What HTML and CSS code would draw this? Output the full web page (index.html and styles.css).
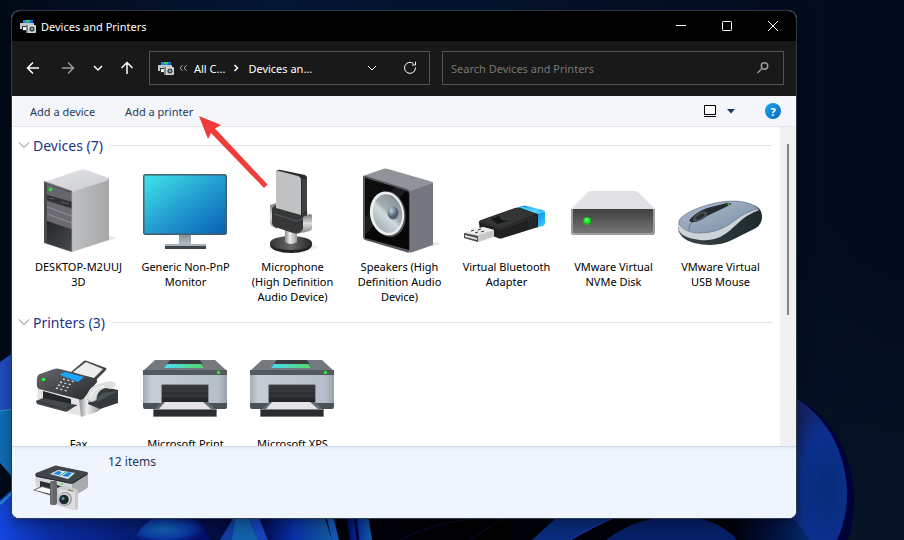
FILE: index.html
```html
<!DOCTYPE html>
<html lang="en">
<head>
<meta charset="utf-8">
<meta name="viewport" content="width=device-width, initial-scale=1">
<title>Devices and Printers</title>
<link rel="stylesheet" href="styles.css">
</head>
<body>
<svg class="wallpaper" viewBox="0 0 904 540" preserveAspectRatio="none" aria-hidden="true">
  <defs>
    <linearGradient id="sky" x2="1" y2="0"><stop stop-color="#010b18"/><stop offset=".3" stop-color="#061838"/><stop offset=".65" stop-color="#031128"/><stop offset="1" stop-color="#010a18"/></linearGradient>
    <linearGradient id="skyLow" x2="0" y2="1"><stop offset=".4" stop-color="#061326" stop-opacity="0"/><stop offset="1" stop-color="#051426"/></linearGradient>
    <radialGradient id="petal" cx=".72" cy=".65" r=".6"><stop stop-color="#052b78"/><stop offset=".65" stop-color="#0c308d"/><stop offset="1" stop-color="#142569"/></radialGradient>
    <linearGradient id="floor" x2="1" y2="0"><stop stop-color="#1447e0"/><stop offset=".1" stop-color="#0b2da4"/><stop offset=".45" stop-color="#010a3c"/><stop offset=".58" stop-color="#000111"/><stop offset="1" stop-color="#000"/></linearGradient>
    <linearGradient id="stripe" x2="1" y2="0"><stop stop-color="#01064a"/><stop offset=".5" stop-color="#0832a8"/><stop offset="1" stop-color="#145b9e"/></linearGradient>
    <radialGradient id="dome" cx=".4" cy=".6" r=".55"><stop stop-color="#1365b0"/><stop offset=".6" stop-color="#0b3ba4"/><stop offset="1" stop-color="#04106a"/></radialGradient>
    <linearGradient id="fold" x2="1" y2="0"><stop stop-color="#000109"/><stop offset=".5" stop-color="#02103a"/><stop offset="1" stop-color="#052a6e"/></linearGradient>
  </defs>
  <rect width="904" height="540" fill="url(#sky)"/>
  <rect x="700" width="204" height="540" fill="url(#skyLow)"/>
  <path d="M790 395c40 18 64 58 64 105 0 14-2 28-6 40h-70z" fill="#02023a"/>
  <path d="M790 395c36 18 57 58 57 100 0 17-4 32-10 45h-60z" fill="url(#petal)"/>
  <path d="M0 362l14-10v60l-14-1z" fill="#224fc0"/>
  <path d="M0 411l14-2v70l-14-16z" fill="#116eb8"/>
  <path d="M0 411l14-2" stroke="#2c9bc4"/>
  <path d="M0 500l14-12v52H0z" fill="#1447d8"/>
  <path d="M0 504l14-13" stroke="#3894c9" stroke-width="2"/>
  <rect y="515" width="510" height="25" fill="url(#floor)"/>
  <path d="M510 515h240v25H510z" fill="#000208"/>
  <path d="M134 540c12-25 36-31 55-25 12 7 18 15 20 25z" fill="url(#dome)"/>
  <path d="M220 540l15-25h19l12 25z" fill="#123da0"/>
  <path d="M232 540l4-25h11l11 25z" fill="#1261ab"/>
  <path d="M248 515l10 25h10l-10-25z" fill="#1744bd"/>
  <path d="M258 515h66l8 25h-63z" fill="url(#stripe)"/>
  <path d="M326 515h7l6 25h-7z" fill="#1557b4"/>
  <path d="M346 515h22l4 25h-22z" fill="url(#stripe)"/>
  <path d="M355 515l3 25" stroke="#010634" stroke-width="3"/>
  <path d="M400 540c40-20 70-22 110-23M470 540l36-24" stroke="#050e34" fill="none"/>
  <path d="M532 540l24-22h56l-42 22z" fill="#092c7d"/>
  <path d="M570 540q24-14 44-22" stroke="#2039c0" fill="none"/>
  <path d="M606 540q34-26 72-22 34-4 60 22z" fill="#061f67"/>
  <path d="M736 540l-5-24h58q12 8 20 24z" fill="url(#fold)"/>
</svg>

<!-- Shared icon symbols -->
<svg class="symbols" aria-hidden="true">
  <defs>
    <linearGradient id="pBody" x2="1" y2="0"><stop stop-color="#a3abb4"/><stop offset=".1" stop-color="#c6cdd5"/><stop offset=".9" stop-color="#b5bec8"/><stop offset="1" stop-color="#98a2ac"/></linearGradient>
    <linearGradient id="pGlass" x2="1" y2="0"><stop stop-color="#49dcf5"/><stop offset="1" stop-color="#58d765"/></linearGradient>
    <linearGradient id="pSlot" x2="0" y2="1"><stop stop-color="#373b3e"/><stop offset="1" stop-color="#1c1f21"/></linearGradient>
  </defs>
  <symbol id="app" viewBox="0 0 16 13">
    <path d="M3 0h10v4H3z" fill="#168ce3"/><path d="M6 0h4v2H6z" fill="#24cf5b"/><path d="M10 1h3v2h-3z" fill="#0b64d0"/>
    <path d="M0 3h14v6H0z" fill="#c3c6c9"/><path d="M2 6h5v5H2z" fill="#292d30"/><path d="M3 7h3v3H3z" fill="#eee"/>
    <rect x="6" y="5" width="10" height="8" rx="1" fill="#d5d7d8"/><path d="M6 5h2v8H6z" fill="#7f8487"/>
    <circle cx="12" cy="9" r="2.600" fill="#364247"/><circle cx="12" cy="9" r="1.300" fill="#82acb8"/>
  </symbol>
  <symbol id="printer" viewBox="0 0 85 85">
    <path d="M0 26L12 15h60l12 11z" fill="#74797e"/>
    <path d="M27 15h30l4 8H21z" fill="#53585c"/><path d="M27 15h30l2 4H24z" fill="#373c40"/>
    <path d="M24 19h34l3 4H21z" fill="url(#pGlass)"/>
    <path d="M0 25h84v34H0z" fill="url(#pBody)"/><path d="M0 25h84v5H0z" fill="#54595d"/>
    <path d="M0 58h84v4q0 2-2 2H2q-2 0-2-2z" fill="#4c5155"/>
    <rect x="18" y="39" width="48" height="23" rx="1.500" fill="#858c92"/><rect x="19" y="40" width="46" height="22" rx="1" fill="url(#pSlot)"/>
    <path d="M19 46h46M19 51h46" stroke="#404346"/>
    <path d="M19 57h46l8 8H11z" fill="#666d72"/><path d="M22 57h38l8 7H16z" fill="#e5e3e6"/>
    <rect x="10" y="64" width="64" height="8" rx="1" fill="#777e83"/><rect x="11" y="65" width="62" height="6" fill="#292d30"/>
    <rect x="74" y="26" width="3" height="3" rx="1" fill="#2df23c"/>
  </symbol>
</svg>

<main class="window">
  <header class="titlebar">
    <svg class="app-icon" aria-hidden="true"><use href="#app"/></svg>
    <h1>Devices and Printers</h1>
    <button class="caption" aria-label="Minimize"><svg viewBox="0 0 12 12"><path d="M1 5.500h10"/></svg></button>
    <button class="caption" aria-label="Maximize"><svg viewBox="0 0 12 12"><rect x="1.500" y="1.500" width="9" height="9" rx=".8"/></svg></button>
    <button class="caption" aria-label="Close"><svg viewBox="0 0 12 12"><path d="M1 1l10 10M11 1L1 11"/></svg></button>
  </header>

  <div class="toolbar">
    <nav class="history" aria-label="History">
      <button class="tool" aria-label="Back"><svg viewBox="0 0 14 14"><path d="M13 7H1.500M7 1.500L1.500 7 7 12.500"/></svg></button>
      <button class="tool dim" aria-label="Forward"><svg viewBox="0 0 14 14"><path d="M1 7h11.500M7 1.500L12.500 7 7 12.500"/></svg></button>
      <button class="tool" aria-label="Recent locations"><svg viewBox="0 0 14 14"><path d="M3 5l4 4 4-4"/></svg></button>
      <button class="tool" aria-label="Up"><svg viewBox="0 0 14 14"><path d="M7 13V1.500M1.500 7L7 1.500 12.500 7"/></svg></button>
    </nav>
    <div class="address">
      <svg class="app-icon" aria-hidden="true"><use href="#app"/></svg>
      <svg class="ancestors" viewBox="0 0 8 8" aria-hidden="true"><path d="M3.500 1.200L1 4l2.500 2.800M7.500 1.200L5 4l2.500 2.800"/></svg>
      <button class="crumb">All C...</button>
      <svg class="separator" viewBox="0 0 6 8" aria-hidden="true"><path d="M1.500 1L4.500 4 1.500 7"/></svg>
      <button class="crumb last">Devices an...</button>
      <button class="inner" aria-label="Previous locations"><svg viewBox="0 0 14 14"><path d="M3 5l4 4 4-4"/></svg></button>
      <button class="inner" aria-label="Refresh"><svg viewBox="0 0 14 14"><path d="M12.500 6.500A5.500 5.500 0 1 1 10.500 2.600M9 4h3.500V.7"/></svg></button>
    </div>
    <label class="search">
      <input type="search" placeholder="Search Devices and Printers" aria-label="Search Devices and Printers">
      <svg viewBox="0 0 14 14" aria-hidden="true"><circle cx="8.500" cy="5" r="3.200"/><path d="M6 7.500L1.500 12"/></svg>
    </label>
  </div>

  <div class="commands">
    <button class="command">Add a device</button>
    <button class="command">Add a printer</button>
    <button class="view" aria-label="Change view"><svg viewBox="0 0 32 14"><path d="M1.500 1.500h11v9h-11z" fill="#fff" stroke="#000"/><path d="M1 12.500h12" stroke="#000"/><path d="M24 5h8l-4 4.500z" fill="#173966"/></svg></button>
    <button class="help" aria-label="Help">?</button>
  </div>

  <div class="content">
    <div class="groups">
      <section class="group">
        <h2><svg viewBox="0 0 12 8" aria-hidden="true"><path d="M1 1.500l5 5 5-5"/></svg><span>Devices (7)</span></h2>
        <ul>
          <li>
            <svg viewBox="0 0 85 85" aria-hidden="true">
              <defs><linearGradient id="pcSide" x2="1" y2="0"><stop stop-color="#bfc0c2"/><stop offset="1" stop-color="#a6a7a9"/></linearGradient><linearGradient id="pcTop" x2="1" y2="1"><stop stop-color="#e3e4e8"/><stop offset="1" stop-color="#cbccd0"/></linearGradient><linearGradient id="pcLow" x2="1" y2="1"><stop stop-color="#24272a"/><stop offset="1" stop-color="#484b4e"/></linearGradient></defs>
              <path d="M73 68l8 2-8 3z" fill="#e9e9e9"/>
              <path d="M36 22l37-12v62L36 84z" fill="url(#pcSide)"/>
              <path d="M8 14L44 2q3-1 6 0l23 8q0 2-3 3L36 24z" fill="url(#pcTop)"/>
              <path d="M8 13l28 10v61L8 75z" fill="#4b4b50"/>
              <path d="M11 16l25 9v9l-25-7z" fill="#66666c"/><path d="M11 27l25 7v6l-25-8z" fill="#303136"/><path d="M13 30l5 1M25 34l8 2" stroke="#606266"/>
              <path d="M11 33l25 8v20l-25-8z" fill="#6b6b71"/><path d="M11 39l25 9M11 46l25 9" stroke="#9b9ba1" stroke-width=".8"/>
              <path d="M11 53l25 9v21l-25-8z" fill="url(#pcLow)"/>
              <path d="M8.500 14l27.500 9v61" fill="none" stroke="#a6a6aa" stroke-width=".7"/>
              <circle cx="14.500" cy="21.500" r="2" fill="#24e33d"/>
            </svg><span>DESKTOP-M2UUJ<br>3D</span>
          </li>
          <li>
            <svg viewBox="0 0 85 85" aria-hidden="true">
              <defs><linearGradient id="screen" x2="1" y2="1"><stop stop-color="#40e4e8"/><stop offset=".5" stop-color="#239ed1"/><stop offset="1" stop-color="#0860b5"/></linearGradient><linearGradient id="foot" x2="0" y2="1"><stop stop-color="#848c94"/><stop offset="1" stop-color="#b8bec5"/></linearGradient></defs>
              <path d="M36 66h12v11H36z" fill="url(#foot)"/>
              <rect y="6" width="84" height="61" rx="2.500" fill="#445e6c"/><rect x="1.500" y="7.500" width="81" height="58" rx="1" fill="url(#screen)"/>
              <path d="M22 76h41v3H22z" fill="#aab0b7"/><path d="M22 78h41v3H22z" fill="#3e464d"/>
            </svg><span>Generic Non-PnP<br>Monitor</span>
          </li>
          <li>
            <svg viewBox="0 0 85 85" aria-hidden="true">
              <defs><linearGradient id="micStem" x2="1" y2="0"><stop stop-color="#888"/><stop offset=".4" stop-color="#eee"/><stop offset="1" stop-color="#999"/></linearGradient><linearGradient id="micArm" x2="0" y2="1"><stop stop-color="#777"/><stop offset=".5" stop-color="#ddd"/><stop offset="1" stop-color="#888"/></linearGradient><linearGradient id="micBase" x2="1" y2="0"><stop stop-color="#333"/><stop offset=".5" stop-color="#686868"/><stop offset="1" stop-color="#242424"/></linearGradient></defs>
              <ellipse cx="43" cy="79" rx="24" ry="5" fill="#efefef"/>
              <ellipse cx="41" cy="77" rx="21" ry="8" fill="#222"/><ellipse cx="41" cy="75" rx="21" ry="7" fill="url(#micBase)"/>
              <path d="M35 62h12v12q-6 4-12 0z" fill="url(#micStem)"/>
              <path d="M20 37l7-2v26l-5-3q-2-1-2-4z" fill="url(#micArm)"/>
              <path d="M26 4q1-3 5-2l24 5q2 1 2 3v36l-7 3-24-7z" fill="#2a2b2c"/>
              <path d="M26 5q0-3 3-2l19 5q3 1 3 4v36l-25-7z" fill="#c0c2c3"/>
              <path d="M29 9l19 5M29 13l19 5M29 17l19 5M29 21l19 5M29 25l19 5M29 29l19 5M29 33l19 5M29 37l19 5" stroke="#adafb1" stroke-width=".7" stroke-dasharray="1 1"/>
              <path d="M52 11v36l5-3V11z" fill="#404142"/>
              <path d="M22 40l4-3v3l25 7 6-5 1 18-8 5q-3 1-7 0l-18-6q-3-1-3-5z" fill="#363738"/>
              <path d="M24 46l23 7 8-3" stroke="#595a5b" fill="none"/>
              <path d="M53 49l7-3q2 0 2 2v13q-1 3-14 4q6-2 5-7z" fill="url(#micArm)"/>
            </svg><span>Microphone<br>(High Definition<br>Audio Device)</span>
          </li>
          <li>
            <svg viewBox="0 0 85 85" aria-hidden="true">
              <defs><linearGradient id="spkCone" x1="1" x2="0" y2="1"><stop stop-color="#7c858b"/><stop offset=".45" stop-color="#a4adb2"/><stop offset=".55" stop-color="#d0dade"/><stop offset="1" stop-color="#939ca3"/></linearGradient><radialGradient id="spkDust" cx=".35" cy=".3"><stop stop-color="#c0d2de"/><stop offset="1" stop-color="#4d5f70"/></radialGradient></defs>
              <path d="M76 74l8 1-8 4z" fill="#e8e8e8"/>
              <path d="M6 8l20-7q2-1 5 0l45 13-1 4-22 7z" fill="#90949a"/><path d="M53 23l23-8v62l-23 8z" fill="#747780"/>
              <path d="M6 9q0-2 3-1l41 13q3 1 3 4v57q0 4-4 2L8 72q-2-1-2-3z" fill="#55575b"/>
              <path d="M8 10l42 13q2 1 2 3v56L8 70z" fill="#070708"/><path d="M8 10l41 13-41 44z" fill="#1c1d1f"/><path d="M8 10l30 9L8 50z" fill="#0d0d0e"/>
              <ellipse cx="31.500" cy="46" rx="17" ry="23" transform="rotate(-10 31.500 46)" fill="#55595d"/>
              <ellipse cx="30" cy="45.500" rx="17" ry="22" transform="rotate(-10 30 45.500)" fill="#eceeef"/>
              <ellipse cx="30.500" cy="45.500" rx="14.500" ry="19.500" transform="rotate(-10 30.500 45.500)" fill="url(#spkCone)"/>
              <ellipse cx="36" cy="45" rx="5.500" ry="6.500" fill="url(#spkDust)"/>
            </svg><span>Speakers (High<br>Definition Audio<br>Device)</span>
          </li>
          <li>
            <svg viewBox="0 0 85 85" aria-hidden="true">
              <defs><linearGradient id="cap" x2="1" y2="1"><stop stop-color="#087ddb"/><stop offset=".45" stop-color="#58d9ff"/><stop offset=".6" stop-color="#159be8"/><stop offset="1" stop-color="#46cffc"/></linearGradient></defs>
              <path d="M78 55l8-4-8 6z" fill="#e4e4e4"/>
              <path d="M53 40l5-2q2-1 5 0l16 4 2 2v12l-2 2-8 2z" fill="url(#cap)"/><path d="M57 39l17 6 7-2" stroke="#62dcff" fill="none"/>
              <path d="M15 55q-1-2 2-3l34-12q3-1 5 0l18 6v13L39 70q-3 1-5 0L16 63z" fill="#1f2021"/>
              <path d="M16 53l36-13q3 0 5 1l16 5-34 13q-3 1-6 0z" fill="#343536"/><path d="M16 54l17 6q3 1 6 0l34-12" stroke="#434445" stroke-width=".7" fill="none"/>
              <path d="M27 51l6 5 12-3-7-1-3-4z" fill="#161718"/><path d="M65 51v10M68 50v10M71 49v10" stroke="#3b3c3d" stroke-width=".7"/>
              <path d="M0 65l19-6 11 3v7L14 74 0 70z" fill="#c6c8ca"/><path d="M0 65l19-6 11 3-16 5z" fill="#ececee"/>
              <path d="M0 65l14 3v6L0 70z" fill="#494b4d"/><path d="M1 67l12 3v2L1 69z" fill="#dedede"/><path d="M7 63l3-1M14 62l3-1M11 65l3-1M17 64l3-1" stroke="#343434"/>
            </svg><span>Virtual Bluetooth<br>Adapter</span>
          </li>
          <li>
            <svg viewBox="0 0 85 85" aria-hidden="true">
              <defs><linearGradient id="disk" x2="0" y2="1"><stop stop-color="#404041"/><stop offset="1" stop-color="#747475"/></linearGradient></defs>
              <path d="M0 41L16 25q2-2 4-2h44q2 0 4 2l16 16z" fill="#e1e1e5"/>
              <path d="M0 41h84v24q0 2-2 2H2q-2 0-2-2z" fill="#9d9d9f"/><path d="M2 41h80v22q0 2-2 2H4q-2 0-2-2z" fill="url(#disk)"/>
              <circle cx="16" cy="53" r="4" fill="#16b923"/><circle cx="16" cy="52.500" r="2.800" fill="#25f33a"/><circle cx="15.500" cy="51.800" r="1" fill="#a2ffa8"/>
            </svg><span>VMware Virtual<br>NVMe Disk</span>
          </li>
          <li>
            <svg viewBox="0 0 85 85" aria-hidden="true">
              <defs><linearGradient id="mouseTop" x2="1" y2="1"><stop stop-color="#acb8ca"/><stop offset=".5" stop-color="#94a5b9"/><stop offset="1" stop-color="#7188a4"/></linearGradient><linearGradient id="mouseLow" x2="1" y2="0"><stop stop-color="#3c464b"/><stop offset="1" stop-color="#1d282d"/></linearGradient></defs>
              <path d="M0 59q0 11 16 16 22 5 38-3l24-12q6-4 6-11 0-11-13-13z" fill="url(#mouseLow)"/>
              <path d="M0 58q0 10 16 13c23 5 33-6 42-14 9-9 16-12 23-15-6-8-25-10-38-8-18 3-32 9-39 15q-4 4-4 9z" fill="#cdd3d9"/>
              <path d="M1 56q7 10 23 9c20-1 29-10 39-17 7-4 12-6 17-7-7-8-24-9-37-7-18 3-32 9-39 15q-4 3-3 7z" fill="url(#mouseTop)" stroke="#68788a" stroke-width=".7"/>
              <path d="M13 54q-3-1 0-4 8-8 20-11l16-4q7 0 3 2L29 48q-9 7-16 6z" fill="#252b30"/><ellipse cx="22" cy="48.500" rx="8" ry="3.500" transform="rotate(-30 22 48.500)" fill="#4d5255"/><ellipse cx="22" cy="48.500" rx="5" ry="2" transform="rotate(-30 22 48.500)" fill="#282d30"/>
              <path d="M14 54q-3 3-3 8" fill="none" stroke="#586879" stroke-width=".8"/><circle cx="50.500" cy="36.500" r="1" fill="#35f044"/>
            </svg><span>VMware Virtual<br>USB Mouse</span>
          </li>
        </ul>
      </section>
      <section class="group">
        <h2><svg viewBox="0 0 12 8" aria-hidden="true"><path d="M1 1.500l5 5 5-5"/></svg><span>Printers (3)</span></h2>
        <ul>
          <li>
            <svg viewBox="0 0 85 85" aria-hidden="true">
              <defs><linearGradient id="faxTop" x2="1" y2="1"><stop stop-color="#65696c"/><stop offset="1" stop-color="#25282b"/></linearGradient><linearGradient id="faxSide" x2="1" y2="0"><stop stop-color="#888b8f"/><stop offset=".35" stop-color="#eee"/><stop offset="1" stop-color="#888b8f"/></linearGradient></defs>
              <path d="M35 27l13-11q1-1 3 0l19 7q1 1 0 2L59 36z" fill="#3f4446"/><path d="M37 27l13-10 17 7-11 11z" fill="#ededee"/>
              <path d="M2 42l43 12v17L3 60q-2-1-2-4z" fill="#e4e4e5"/><path d="M43 54l16-12 7 20q-2 4-8 6l-13 4z" fill="url(#faxSide)"/>
              <path d="M7 46l28 8v9L7 57z" fill="#23282b"/><path d="M0 56l7-3 34 7-9 6q-2 1-5 0L1 59z" fill="#42484b"/><path d="M0 56l28 8 13-4" stroke="#2b3032" stroke-width=".7" fill="none"/>
              <path d="M1 34q0-4 3-5l14-5q3-1 6 0l34 9q4 1 3 4l-13 16q-2 3-6 1L3 44q-3-1-2-10z" fill="url(#faxTop)"/>
              <path d="M24 30q1-2 5-3l19 5-6 5z" fill="#19a3fa"/>
              <path d="M27 34l12 3M24 37l12 3M22 40l12 3M20 43l11 3" stroke="#d6d9db" stroke-width="1.400" stroke-dasharray="2 2.500"/>
              <circle cx="7.500" cy="34.500" r="1.800" fill="#2bec3f"/>
              <path d="M54 53l14-11 14 3v13l-18 6-12-5z" fill="#33393c"/><path d="M57 56l10-8 15-2-19 10z" fill="#4c5357"/>
              <path d="M51 53q0-12 15-15 12-4 14 1 0 3-6 5l-4-1q-7 1-9 8l-1 4q-5 4-9 0z" fill="#dedfdf"/>
              <path d="M54 52q3-9 14-11" fill="none" stroke="#fff"/><path d="M51 54q3 4 9 1l1-4" fill="none" stroke="#aaa" stroke-width=".7"/>
            </svg><span>Fax</span>
          </li>
          <li><svg aria-hidden="true"><use href="#printer"/></svg><span>Microsoft Print</span></li>
          <li><svg aria-hidden="true"><use href="#printer"/></svg><span>Microsoft XPS</span></li>
        </ul>
      </section>
    </div>
    <div class="scrollbar"><div class="thumb"></div></div>
  </div>

  <footer class="status">
    <svg viewBox="0 0 56 48" aria-hidden="true">
      <path d="M2 11l38 8v14L3 23z" fill="#d5d6d8"/><path d="M39 18l16-9v13q0 2-2 3l-14 8z" fill="#a9acae"/>
      <path d="M7 17l25 6v6L7 23z" fill="#2a2d30"/><path d="M0 26l9-4 17 4-7 6z" fill="#555b5f"/><path d="M2 26l7-3 15 4-6 3z" fill="#fff"/>
      <path d="M3 9l18-7q2-1 4 0l29 6q2 1 0 3L41 19q-2 1-5 0L4 13q-3-2-1-4z" fill="#41464a"/><path d="M3 12l33 7q3 1 5-1l13-8" stroke="#222629" fill="none"/>
      <path d="M17 10l8-4 17 3-7 6z" fill="#d9ecfa"/><path d="M20 10l5-3 4 1-3 3z" fill="#2487d8"/><path d="M29 12l6-4 4 1-4 4z" fill="#2487d8"/><path d="M26 12l7-4" stroke="#49ae71"/>
      <rect x="17" y="17" width="7" height="24" rx="2" fill="#62666a"/><path d="M19 19v20" stroke="#7f8386"/>
      <path d="M24 24l5-2 15 3q1 0 1 2v18l-3 1-16-4q-2-1-2-3z" fill="#c8cacc"/><path d="M26 25l16 3v17l-16-3z" fill="#dcdedf"/><path d="M35 26l5 1" stroke="#776f43"/>
      <circle cx="32" cy="35" r="7" fill="#979b9e"/><circle cx="31.500" cy="35" r="6" fill="#d5d7d8"/><circle cx="31" cy="35.500" r="4.800" fill="#20282c"/><circle cx="30" cy="34.500" r="1.500" fill="#3ba0b7"/><circle cx="29" cy="20" r="1" fill="#22dd45"/>
    </svg>
    <p>12 items</p>
  </footer>

  <svg class="pointer" viewBox="0 0 70 74" aria-hidden="true"><path d="M0 0l22 9-6 3.500L68.500 68.500 65 72 12 17l-3 6z" fill="#f23c3b"/></svg>
</main>
</body>
</html>
```

FILE: styles.css
```css
* {
  box-sizing: border-box;
}

body {
  margin: 0;
  height: 100vh;
  padding: 10px 107px 21px 11px;
  display: flex;
  background: #020b19;
  font: 11px/15px "Noto Sans", "Open Sans", sans-serif;
  color: #000;
  overflow: hidden;
}

h1,
h2,
p,
ul {
  margin: 0;
  padding: 0;
  font-weight: 400;
}

button,
input {
  border: 0;
  padding: 0;
  background: none;
  font: inherit;
  color: inherit;
}

svg {
  display: block;
  flex: none;
}

.wallpaper {
  position: absolute;
  top: 0;
  left: 0;
  width: 100%;
  height: 100%;
}

.symbols {
  position: absolute;
  width: 0;
  height: 0;
}

.window {
  position: relative;
  flex: 1;
  min-width: 0;
  display: flex;
  flex-direction: column;
  border: 1px solid #303b49;
  border-radius: 8px;
  overflow: hidden;
  background: #fff;
  box-shadow: 0 4px 16px rgb(0 0 0 / 40%);
}

.titlebar {
  display: flex;
  flex: none;
  align-items: center;
  height: 30px;
  padding-left: 8px;
  background: #000;
  color: #fff;
}

.titlebar h1 {
  flex: 1;
  margin-left: 5px;
  font-size: 11px;
}

.app-icon {
  width: 16px;
  height: 13px;
}

.caption {
  display: grid;
  place-items: center;
  width: 46px;
  height: 28px;
}

.caption svg {
  width: 12px;
  height: 12px;
  fill: none;
  stroke: #fff;
}

.toolbar {
  display: grid;
  grid-template-columns: 132px 281fr 354fr;
  flex: none;
  height: 55px;
  padding: 10px 12px 11px 5px;
  background: #191919;
  color: #fff;
}

.history {
  display: grid;
  grid-template-columns: 32px 38px 22px 36px;
}

.tool {
  display: grid;
  place-items: center;
}

.tool svg,
.inner svg {
  width: 14px;
  height: 14px;
  fill: none;
  stroke: currentColor;
}

.tool svg {
  stroke-width: 1.5;
}

.tool.dim {
  color: #999;
}

.address {
  display: flex;
  align-items: center;
  min-width: 0;
  border: 1px solid #535353;
  padding-left: 8px;
}

.ancestors {
  width: 8px;
  height: 8px;
  margin-left: 5px;
  fill: none;
  stroke: #aaa;
}

.separator {
  width: 6px;
  height: 8px;
  margin: 0 9px 0 8px;
  fill: none;
  stroke: #fff;
  stroke-width: 1.5;
}

.crumb {
  margin-left: 7px;
  white-space: nowrap;
}

.crumb.last {
  flex: 1;
  margin-left: 0;
  text-align: left;
}

.inner {
  display: grid;
  place-items: center;
  width: 38px;
  height: 32px;
}

.search {
  display: flex;
  align-items: center;
  min-width: 0;
  margin-left: 12px;
  border: 1px solid #535353;
  padding: 0 13px 0 8px;
}

.search input {
  flex: 1;
  min-width: 0;
  outline: 0;
}

.search input::placeholder {
  color: #777;
  opacity: 1;
}

.search svg {
  width: 14px;
  height: 14px;
  fill: none;
  stroke: #999;
  stroke-width: 1.5;
}

.commands {
  display: flex;
  flex: none;
  align-items: center;
  gap: 30px;
  height: 31px;
  padding: 0 15px 0 18px;
  border-bottom: 1px solid #e5e6e8;
  background: #f4f6f9;
  color: #1e395b;
}

.view {
  margin-left: auto;
}

.view svg {
  width: 32px;
  height: 14px;
}

.help {
  width: 16px;
  height: 16px;
  border-radius: 8px;
  background: linear-gradient(135deg, #20a5e8, #0567c9);
  color: #fff;
  font-weight: 700;
}

.content {
  display: flex;
  flex: 1;
  min-height: 0;
  overflow: hidden;
}

.groups {
  flex: 1;
  padding-top: 8px;
}

.group {
  margin-bottom: 8px;
}

.group h2 {
  display: flex;
  align-items: center;
  height: 20px;
  margin: 0 8px 13px 6px;
  font-size: 14px;
  color: #1e3287;
}

.group h2 svg {
  width: 12px;
  height: 8px;
  margin-right: 3px;
  fill: none;
  stroke: #777;
}

.group h2::after {
  content: "";
  flex: 1;
  height: 1px;
  margin-left: 7px;
  background: #e2e2e2;
}

.group ul {
  display: grid;
  grid-template-columns: repeat(auto-fill, 107px);
  padding-left: 13px;
  list-style: none;
}

.group li {
  display: flex;
  flex-direction: column;
  align-items: center;
  gap: 6px;
  text-align: center;
}

.group li svg {
  width: 85px;
  height: 85px;
}

.scrollbar {
  width: 16px;
  padding: 17px 7px;
  background: #f0f0f0;
}

.thumb {
  height: 60%;
  background: #858585;
}

.status {
  display: flex;
  flex: none;
  height: 72px;
  padding: 7px 21px;
  border-top: 1px solid #cbd7ea;
  background: linear-gradient(#e3eaf5, #f0f4fc 3px);
  color: #1e395b;
  font-size: 12px;
}

.status svg {
  width: 56px;
  height: 48px;
  margin-top: 10px;
}

.status p {
  margin-left: 19px;
}

.pointer {
  position: absolute;
  left: 187px;
  top: 105px;
  width: 70px;
  height: 74px;
}
```
